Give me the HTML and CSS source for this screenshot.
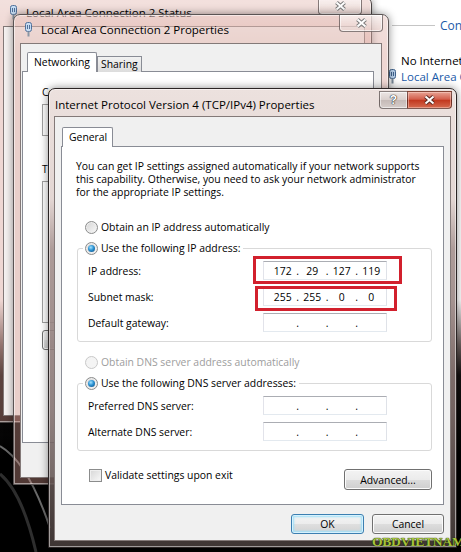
FILE: index.html
```html
<!DOCTYPE html>
<html lang="en">
<head>
    <meta charset="UTF-8">
    <meta name="viewport" content="width=device-width, initial-scale=1.0">
    <title>Internet Protocol Version 4 (TCP/IPv4) Properties</title>
    <link rel="stylesheet" href="styles.css">
</head>
<body>
<div class="desktop">
    <!-- control panel window behind everything -->
    <div class="cpl">
        <div class="cpl-side">
            <div class="cpl-head"><span class="cpl-rule"></span><span class="link">Connections</span></div>
            <div class="cpl-status">No Internet access</div>
            <div class="cpl-conn">
                <svg class="net-icon" width="9" height="15" viewBox="0 0 9 15"><rect x="1.5" y="0.5" width="6" height="9" rx="2" fill="#b9d3ef" stroke="#41648f"/><line x1="3.5" y1="3" x2="3.5" y2="7" stroke="#41648f"/><line x1="5.5" y1="3" x2="5.5" y2="7" stroke="#41648f"/><rect x="3.5" y="9.5" width="2" height="5" fill="#7d8d9e"/></svg>
                <span class="link">Local Area Connection 2</span>
            </div>
        </div>
    </div>

    <svg class="wallpaper" width="461" height="552" viewBox="0 0 461 552">
        <path d="M0 446 Q 28 462 50 528" fill="none" stroke="#6a6a6a" stroke-width="2"/>
        <path d="M0 474 Q 22 492 36 552" fill="none" stroke="#2e2e2e" stroke-width="3"/>
    </svg>

    <!-- Local Area Connection 2 Status -->
    <div class="win win-status">
        <div class="titlebar">
            <svg class="net-icon" width="9" height="15" viewBox="0 0 9 15"><rect x="1.5" y="0.5" width="6" height="9" rx="2" fill="#c6dcf3" stroke="#50709a"/><line x1="3.5" y1="3" x2="3.5" y2="7" stroke="#50709a"/><line x1="5.5" y1="3" x2="5.5" y2="7" stroke="#50709a"/><rect x="3.5" y="9.5" width="2" height="5" fill="#8a97a5"/></svg>
            <span class="title">Local Area Connection 2 Status</span>
            <div class="caption">
                <span class="cap cap-close inactive"><svg width="13" height="10" viewBox="0 0 13 10"><path d="M2.5 1.5 L10.5 8.5 M10.5 1.5 L2.5 8.5" stroke="#7b7b7b" stroke-width="4"/><path d="M2.5 1.5 L10.5 8.5 M10.5 1.5 L2.5 8.5" stroke="#fff" stroke-width="2"/></svg></span>
            </div>
        </div>
        <div class="client"></div>
    </div>

    <!-- Local Area Connection 2 Properties -->
    <div class="win win-props">
        <div class="titlebar">
            <svg class="net-icon" width="9" height="15" viewBox="0 0 9 15"><rect x="1.5" y="0.5" width="6" height="9" rx="2" fill="#c6dcf3" stroke="#50709a"/><line x1="3.5" y1="3" x2="3.5" y2="7" stroke="#50709a"/><line x1="5.5" y1="3" x2="5.5" y2="7" stroke="#50709a"/><rect x="3.5" y="9.5" width="2" height="5" fill="#8a97a5"/></svg>
            <span class="title">Local Area Connection 2 Properties</span>
            <div class="caption">
                <span class="cap cap-close inactive"><svg width="13" height="10" viewBox="0 0 13 10"><path d="M2.5 1.5 L10.5 8.5 M10.5 1.5 L2.5 8.5" stroke="#7b7b7b" stroke-width="4"/><path d="M2.5 1.5 L10.5 8.5 M10.5 1.5 L2.5 8.5" stroke="#fff" stroke-width="2"/></svg></span>
            </div>
        </div>
        <div class="client props-client">
            <div class="tabs">
                <span class="tab selected">Networking</span>
                <span class="tab">Sharing</span>
            </div>
            <div class="panel props-panel">
                <div class="line">Connect using:</div>
                <div class="listbox adapter"></div>
                <div class="line items-label">This connection uses the following items:</div>
                <div class="listbox items"></div>
                <div class="small-btns"><span class="btn">Install...</span></div>
            </div>
        </div>
    </div>

    <!-- Internet Protocol Version 4 (TCP/IPv4) Properties -->
    <div class="win win-tcp">
        <div class="titlebar">
            <span class="title">Internet Protocol Version 4 (TCP/IPv4) Properties</span>
            <div class="caption">
                <span class="cap cap-help">?</span>
                <span class="cap cap-close active"><svg width="13" height="10" viewBox="0 0 13 10"><path d="M2.5 1.5 L10.5 8.5 M10.5 1.5 L2.5 8.5" stroke="#5a2a22" stroke-width="4"/><path d="M2.5 1.5 L10.5 8.5 M10.5 1.5 L2.5 8.5" stroke="#fff" stroke-width="2"/></svg></span>
            </div>
        </div>
        <div class="client tcp-client">
            <div class="tabs">
                <span class="tab selected general">General</span>
            </div>
            <div class="panel tcp-panel">
                <p class="intro">You can get IP settings assigned automatically if your network supports<br>this capability. Otherwise, you need to ask your network administrator<br>for the appropriate IP settings.</p>

                <div class="option first-option"><span class="radio"></span><span>Obtain an IP address automatically</span></div>

                <fieldset class="group">
                    <legend class="option"><span class="radio on"></span><span>Use the following IP address:</span></legend>
                    <div class="field first-field">
                        <span class="field-label">IP address:</span>
                        <span class="ipbox"><span class="seg">172</span><span class="dot">.</span><span class="seg">29</span><span class="dot">.</span><span class="seg">127</span><span class="dot">.</span><span class="seg">119</span></span>
                    </div>
                    <div class="field">
                        <span class="field-label">Subnet mask:</span>
                        <span class="ipbox"><span class="seg">255</span><span class="dot">.</span><span class="seg">255</span><span class="dot">.</span><span class="seg">0</span><span class="dot">.</span><span class="seg">0</span></span>
                    </div>
                    <div class="field">
                        <span class="field-label">Default gateway:</span>
                        <span class="ipbox"><span class="seg"></span><span class="dot">.</span><span class="seg"></span><span class="dot">.</span><span class="seg"></span><span class="dot">.</span><span class="seg"></span></span>
                    </div>
                </fieldset>

                <div class="option disabled dns-option"><span class="radio off"></span><span>Obtain DNS server address automatically</span></div>

                <fieldset class="group">
                    <legend class="option"><span class="radio on"></span><span>Use the following DNS server addresses:</span></legend>
                    <div class="field first-field">
                        <span class="field-label">Preferred DNS server:</span>
                        <span class="ipbox"><span class="seg"></span><span class="dot">.</span><span class="seg"></span><span class="dot">.</span><span class="seg"></span><span class="dot">.</span><span class="seg"></span></span>
                    </div>
                    <div class="field">
                        <span class="field-label">Alternate DNS server:</span>
                        <span class="ipbox"><span class="seg"></span><span class="dot">.</span><span class="seg"></span><span class="dot">.</span><span class="seg"></span><span class="dot">.</span><span class="seg"></span></span>
                    </div>
                </fieldset>

                <div class="validate-row">
                    <label class="option"><span class="check"></span><span>Validate settings upon exit</span></label>
                    <span class="btn advanced">Advanced...</span>
                </div>
            </div>
            <div class="dialog-btns">
                <span class="btn default">OK</span>
                <span class="btn">Cancel</span>
            </div>
        </div>
    </div>

    <!-- red highlight boxes drawn over the screenshot -->
    <div class="mark mark-ip"></div>
    <div class="mark mark-mask"></div>

    <div class="watermark">OBDVIETNAM</div>
</div>
</body>
</html>
```

FILE: styles.css
```css
body {
    margin: 0;
    font-family: "Open Sans", "Noto Sans", sans-serif;
    font-size: 10.4px;
    color: #000;
    background: #000;
}
.desktop {
    position: relative;
    width: 461px;
    height: 552px;
    overflow: hidden;
}
.cpl {
    position: absolute;
    left: 0;
    top: 0;
    width: 461px;
    height: 552px;
    background: linear-gradient(180deg, #ffffff 0, #ffffff 300px, #6b5f5d 345px, #141111 375px, #000 460px);
    font-size: 11.5px;
}
.cpl-side {
    margin-left: 388px;
    padding-top: 17px;
}
.cpl-head {
    display: flex;
    align-items: center;
    height: 16px;
}
.cpl-rule {
    flex: none;
    width: 43px;
    height: 1px;
    margin: 0 5px 0 4px;
    background: #c5c5c5;
}
.link {
    color: #1a5aa8;
    white-space: nowrap;
}
.cpl-head .link {
    font-size: 12px;
}
.cpl-status {
    margin-top: 20px;
    padding-left: 13px;
    white-space: nowrap;
}
.cpl-conn {
    display: flex;
    align-items: center;
    gap: 4px;
    margin-top: 1px;
}
.cpl-conn .net-icon {
    flex: none;
}
.wallpaper {
    position: absolute;
    left: 0;
    top: 0;
}

/* aero windows */
.win {
    position: absolute;
    box-sizing: border-box;
    border: 1px solid #4a4444;
    border-radius: 7px 7px 0 0;
    padding: 0 6px 6px;
    display: flex;
    flex-direction: column;
    background: linear-gradient(180deg, rgba(255,255,255,0.25) 0, rgba(255,255,255,0) 40px), rgba(214,150,140,0.38);
    box-shadow: 0 0 9px rgba(0,0,0,0.45), inset 0 0 0 1px rgba(255,255,255,0.5);
}
.titlebar {
    display: flex;
    align-items: flex-start;
    margin: 0 -6px;
    padding: 0 5px 0 11px;
    height: 28px;
    flex: none;
}
.titlebar .net-icon {
    margin-top: 7px;
    margin-right: 8px;
}
.title {
    font-size: 11.5px;
    line-height: 16px;
    margin-top: 7px;
    white-space: nowrap;
    color: #000;
}
.caption {
    margin-left: auto;
    display: flex;
}
.cap {
    height: 17px;
    box-sizing: border-box;
    border: 1px solid rgba(40,30,30,0.55);
    border-top: none;
    display: flex;
    align-items: center;
    justify-content: center;
}
.cap-close.inactive {
    width: 44px;
    border-radius: 0 0 4px 4px;
    background: linear-gradient(180deg, rgba(255,255,255,0.6), rgba(230,210,206,0.5));
    box-shadow: inset 0 0 0 1px rgba(255,255,255,0.6);
}
.cap-help {
    width: 28px;
    border-right: none;
    border-radius: 0 0 0 4px;
    background: linear-gradient(180deg, #ece6e4 0, #d9cfcc 50%, #c5bab7 51%, #d6cdca 100%);
    box-shadow: inset 0 0 0 1px rgba(255,255,255,0.55);
    color: #fff;
    font-family: "Liberation Sans", sans-serif;
    font-weight: bold;
    font-size: 12px;
    text-shadow: 0 0 1px #333, 0 0 1px #333, 0 0 1px #333;
}
.cap-close.active {
    width: 45px;
    border-radius: 0 0 4px 0;
    background: linear-gradient(180deg, #e8a394 0, #d35f4c 45%, #c2381f 52%, #d56a4f 100%);
    box-shadow: inset 0 0 0 1px rgba(255,220,210,0.45);
}
.client {
    flex: 1;
    background: #f0f0f0;
    border: 1px solid #837978;
    box-sizing: border-box;
}

.win-status {
    left: -4px;
    top: -3px;
    width: 376px;
    height: 426px;
}
.win-status .titlebar {
    padding-right: 9px;
    padding-left: 12px;
}
.win-status .client {
    background: #f6f2f1;
}
.win-props {
    left: 13px;
    top: 14px;
    width: 376px;
    height: 471px;
    border-color: #5a5454;
}
.win-props .titlebar {
    padding-left: 10px;
}
.win-tcp {
    left: 48px;
    top: 88px;
    width: 409px;
    height: 460px;
    padding: 0 5px 6px;
    border-color: #2a2424;
    background: linear-gradient(180deg, #ece1de 0, #e3d6d3 110px, rgba(165,145,142,0.9) 160px, rgba(130,112,110,0.88) 320px, rgba(70,60,58,0.88) 460px);
}
.win-tcp .titlebar {
    margin: 0 -5px;
    padding: 0 4px 0 6px;
    height: 27px;
}
.win-tcp .title {
    margin-top: 8px;
}
.win-tcp .caption {
    margin-top: 2px;
}
.win-tcp .cap {
    height: 18px;
    border-top: 1px solid rgba(40,30,30,0.45);
}

/* tabs and panels */
.tabs {
    display: flex;
    align-items: flex-end;
    height: 20px;
}
.tab {
    box-sizing: border-box;
    height: 16px;
    padding: 0 3px;
    border: 1px solid #898c95;
    border-bottom: none;
    background: linear-gradient(180deg, #f2f2f2, #dcdcdc);
    line-height: 15px;
    white-space: nowrap;
}
.tab.selected {
    height: 20px;
    background: #fff;
    border-radius: 2px 2px 0 0;
    line-height: 19px;
    padding: 0 6px;
    position: relative;
    z-index: 1;
}
.panel {
    margin-top: -1px;
    box-sizing: border-box;
    border: 1px solid #898c95;
    background: #fff;
}

.props-client {
    padding: 8px 7px 0 1px;
}
.props-client .tabs {
    padding-left: 5px;
}
.props-panel {
    height: 372px;
    padding: 14px 0 0 19px;
}
.line {
    line-height: 13px;
    white-space: nowrap;
}
.listbox {
    border: 1px solid #a0a0a0;
    background: #fff;
    margin-top: 5px;
    width: 300px;
}
.adapter {
    height: 30px;
}
.items-label {
    margin-top: 27px;
}
.items {
    height: 140px;
    margin-top: 5px;
}
.small-btns {
    margin-top: 7px;
    display: flex;
}
.small-btns .btn {
    width: 72px;
}

/* tcp dialog */
.tcp-client {
    padding: 10px 6px 0 6px;
}
.tcp-client .tabs {
    padding-left: 1px;
}
.general {
    width: 51px;
    text-align: center;
    padding: 0;
}
.tcp-panel {
    height: 359px;
    padding: 13px 11px 0 14px;
}
.intro {
    margin: 0;
    line-height: 13px;
    white-space: nowrap;
}
.option {
    display: flex;
    align-items: center;
    gap: 3px;
    height: 14px;
    white-space: nowrap;
}
.first-option {
    margin-top: 21px;
    padding-left: 9px;
}
.disabled {
    color: #9d9d9d;
}
.dns-option {
    margin-top: 13px;
    padding-left: 9px;
}
.radio {
    width: 13px;
    height: 13px;
    box-sizing: border-box;
    border-radius: 50%;
    border: 1px solid #8b8c8c;
    background: linear-gradient(135deg, #d4d4d4, #f9f9f9);
    box-shadow: inset 0 0 0 1px #eeeeee;
    display: flex;
    align-items: center;
    justify-content: center;
    flex: none;
}
.radio.on::after {
    content: "";
    width: 7px;
    height: 7px;
    border-radius: 50%;
    background: radial-gradient(circle at 40% 35%, #a5e3ff 0, #2b92d3 45%, #0c4678 100%);
}
.radio.off {
    border-color: #c9c9c9;
    background: #f4f4f4;
    box-shadow: none;
}
.group {
    margin: 7px 0 0 1px;
    padding: 0 0 9px;
    border: 1px solid #d9d9d9;
    border-radius: 3px;
    min-width: 0;
}
.group legend {
    margin-left: 5px;
    padding: 0 3px 0 2px;
}
.field {
    display: flex;
    align-items: center;
    height: 19px;
    margin-top: 7px;
    padding-left: 10px;
}
.field.first-field {
    margin-top: 6px;
}
.field-label {
    width: 175px;
    white-space: nowrap;
}
.ipbox {
    width: 124px;
    height: 19px;
    box-sizing: border-box;
    border: 1px solid;
    border-color: #abadb3 #dfe2e8 #e3e9ef #e2e3ea;
    background: #fff;
    display: flex;
    align-items: center;
    padding-left: 4px;
}
.seg {
    width: 30px;
    text-align: center;
}
.dot {
    width: 0;
    display: flex;
    justify-content: center;
}
.validate-row {
    margin-top: 17px;
    padding-left: 13px;
    display: flex;
    align-items: flex-start;
    justify-content: space-between;
}
.check {
    width: 13px;
    height: 13px;
    box-sizing: border-box;
    border: 1px solid #8b8c8c;
    background: linear-gradient(135deg, #d6d6d6, #f9f9f9);
    box-shadow: inset 0 0 0 1px #efefef;
}
.btn {
    box-sizing: border-box;
    height: 20px;
    border: 1px solid #707070;
    border-radius: 3px;
    background: linear-gradient(180deg, #f3f3f3 0, #ebebeb 50%, #dddddd 50%, #cfcfcf 100%);
    box-shadow: inset 0 0 0 1px #fbfbfb;
    display: flex;
    align-items: center;
    justify-content: center;
    white-space: nowrap;
}
.advanced {
    width: 88px;
    height: 21px;
    margin-top: 1px;
}
.dialog-btns {
    display: flex;
    justify-content: flex-end;
    gap: 8px;
    margin-top: 9px;
}
.dialog-btns .btn {
    width: 72px;
}
.btn.default {
    width: 73px;
    border-color: #3c7fb1;
    background: linear-gradient(180deg, #f4f4f4 0, #ececec 50%, #dfdfdf 50%, #d2d2d2 100%);
    box-shadow: inset 0 0 0 1px #d6f1fd, inset 0 0 2px 2px #9fe0f9;
}

.mark {
    position: absolute;
    box-sizing: border-box;
    border: 3px solid #d2202d;
}
.mark-ip {
    left: 253px;
    top: 256px;
    width: 149px;
    height: 28px;
}
.mark-mask {
    left: 255px;
    top: 286px;
    width: 142px;
    height: 25px;
}
.watermark {
    position: absolute;
    left: 372px;
    top: 533px;
    font-family: "Liberation Serif", serif;
    font-weight: bold;
    font-size: 13.5px;
    line-height: 17px;
    letter-spacing: -0.2px;
    color: #a6c23c;
    text-shadow: 0 0 1px #1a2a00, 0 0 1px #1a2a00;
}
```
